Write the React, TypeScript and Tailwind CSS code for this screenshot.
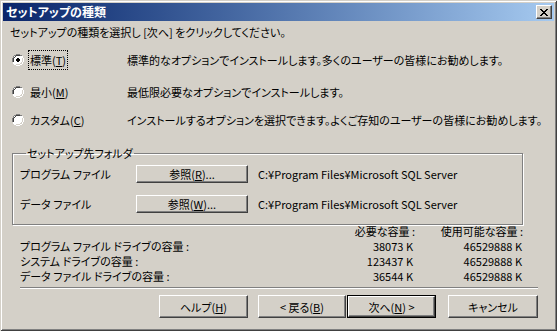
import React from 'react'

const font = "font-['Noto_Sans_CJK_JP',sans-serif] [font-feature-settings:'palt']"

// classic raised button
function Btn({ children, className = '', isDefault = false }: { children: React.ReactNode; className?: string; isDefault?: boolean }) {
  const face = (
    <div className="flex h-full w-full items-center justify-center border border-t-white border-l-white border-b-[#404040] border-r-[#404040] bg-[#d4d0c8] shadow-[inset_-1px_-1px_0_#808080]">
      {children}
    </div>
  )
  if (isDefault) {
    return <div className={`border border-black ${className}`}>{face}</div>
  }
  return <div className={className}>{face}</div>
}

function Radio({ checked }: { checked?: boolean }) {
  return (
    <svg width="12" height="12" viewBox="0 0 12 12" className="shrink-0">
      <path d="M4 0h4v1h2v1h1v2h1v4h-1v2h-1v1h-2v1h-4v-1h-2v-1h-1v-2h-1v-4h1v-2h1v-1h2z" fill="#ffffff" />
      <path d="M4 0h4v1h2v1h-2v-1h-4v1h-2v2h-1v4h-1v-4h1v-2h1v-1h2z" fill="#808080" />
      <path d="M4 1h4v1h-4v1h-1v1h-1v4h-1v-4h1v-1h-0v0h1v-1h1v-1z" fill="#404040" />
      <path d="M11 4h1v4h-1v2h-1v1h-2v1h-4v-1h4v-1h2v-2h1z" fill="#ffffff" />
      <path d="M10 4h1v4h-1v2h-2v1h-4v-1h4v-1h1v-1h1z" fill="#d4d0c8" />
      {checked && <path d="M5 4h2v1h1v2h-1v1h-2v-1h-1v-2h1z" fill="#000000" />}
    </svg>
  )
}

const options = [
  { label: '標準', key: 'T', desc: '標準的なオプションでインストールします。多くのユーザーの皆様にお勧めします。', checked: true, mt: 'mt-[13px]' },
  { label: '最小', key: 'M', desc: '最低限必要なオプションでインストールします。', checked: false, mt: 'mt-[16px]' },
  { label: 'カスタム', key: 'C', desc: 'インストールするオプションを選択できます。よくご存知のユーザーの皆様にお勧めします。', checked: false, mt: 'mt-[12px]' },
]

const drives = [
  { name: 'プログラム ファイル ドライブの容量 :', need: '38073 K', free: '46529888 K' },
  { name: 'システム ドライブの容量 :', need: '123437 K', free: '46529888 K' },
  { name: 'データ ファイル ドライブの容量 :', need: '36544 K', free: '46529888 K' },
]

export default function App() {
  return (
    <div className={`h-[331px] w-[557px] bg-[#d4d0c8] p-[3px] text-[11px] leading-[14px] text-black ${font} shadow-[inset_1px_1px_0_#d4d0c8,inset_-1px_-1px_0_#404040,inset_2px_2px_0_#ffffff,inset_-2px_-2px_0_#808080]`}>
      {/* title bar */}
      <div className="flex h-[18px] items-center justify-between bg-gradient-to-r from-[#0a246a] to-[#a6caf0] pl-[3px] pr-[2px]">
        <span className="text-[12px] font-bold text-white">セットアップの種類</span>
        <Btn className="h-[14px] w-[16px]">
          <svg width="8" height="7" viewBox="0 0 8 7">
            <path d="M0 0h2v1h1v1h2v-1h1v-1h2v1h-1v1h-1v1h-1v1h1v1h1v1h1v1h-2v-1h-1v-1h-2v1h-1v1h-2v-1h1v-1h1v-1h1v-1h-1v-1h-1v-1h-1z" fill="#000" />
          </svg>
        </Btn>
      </div>

      {/* body */}
      <div className="flex flex-col">
        <p className="ml-[7px] mt-[4px] whitespace-nowrap">セットアップの種類を選択し [次へ] をクリックしてください。</p>

        {options.map(o => (
          <div key={o.key} className={`flex h-[16px] items-center whitespace-nowrap ${o.mt}`}>
            <div className="ml-[9px]">
              <Radio checked={o.checked} />
            </div>
            <div className="ml-[5px] w-[98px]">
              <span className={`px-[1px] py-[1px] ${o.checked ? 'outline outline-1 outline-dotted outline-black' : ''}`}>
                {o.label}(<u>{o.key}</u>)
              </span>
            </div>
            <span>{o.desc}</span>
          </div>
        ))}

        <fieldset className="ml-[9px] mt-[18px] w-[511px] border border-[#808080] pb-[11px] pl-[7px] shadow-[1px_1px_0_#ffffff,inset_1px_1px_0_#ffffff]">
          <legend className="ml-[6px] px-[1px]">セットアップ先フォルダ</legend>
          <div className="mt-[5px] flex items-center whitespace-nowrap">
            <span className="w-[116px]">プログラム ファイル</span>
            <Btn className="h-[18px] w-[112px]">
              <span>参照(<u>R</u>)...</span>
            </Btn>
            <span className="ml-[10px]">C:¥Program Files¥Microsoft SQL Server</span>
          </div>
          <div className="mt-[12px] flex items-center whitespace-nowrap">
            <span className="w-[116px]">データ ファイル</span>
            <Btn className="h-[18px] w-[112px]">
              <span>参照(<u>W</u>)...</span>
            </Btn>
            <span className="ml-[10px]">C:¥Program Files¥Microsoft SQL Server</span>
          </div>
        </fieldset>

        <div className="ml-[17px] mt-[-1px] grid w-[503px] grid-cols-[290px_105px_108px] grid-rows-[15px_15px_15px_15px] items-center whitespace-nowrap leading-[13px]">
          <span />
          <span className="text-right">必要な容量 :</span>
          <span className="text-right">使用可能な容量 :</span>
          {drives.map(d => (
            <React.Fragment key={d.name}>
              <span>{d.name}</span>
              <span className="pr-[2px] text-right">{d.need}</span>
              <span className="pr-[1px] text-right">{d.free}</span>
            </React.Fragment>
          ))}
        </div>

        <div className="ml-[17px] mt-[3px] h-[2px] w-[518px] border-t border-t-[#808080] border-b border-b-white" />

        <div className="mt-[6px] flex h-[23px]">
          <Btn className="ml-[156px] w-[89px]">
            <span>ヘルプ(<u>H</u>)</span>
          </Btn>
          <Btn className="ml-[10px] w-[88px]">
            <span>&lt; 戻る(<u>B</u>)</span>
          </Btn>
          <Btn isDefault className="ml-[1px] w-[89px]">
            <span>次へ(<u>N</u>) &gt;</span>
          </Btn>
          <Btn className="ml-[12px] w-[90px]">
            <span>キャンセル</span>
          </Btn>
        </div>
      </div>
    </div>
  )
}
